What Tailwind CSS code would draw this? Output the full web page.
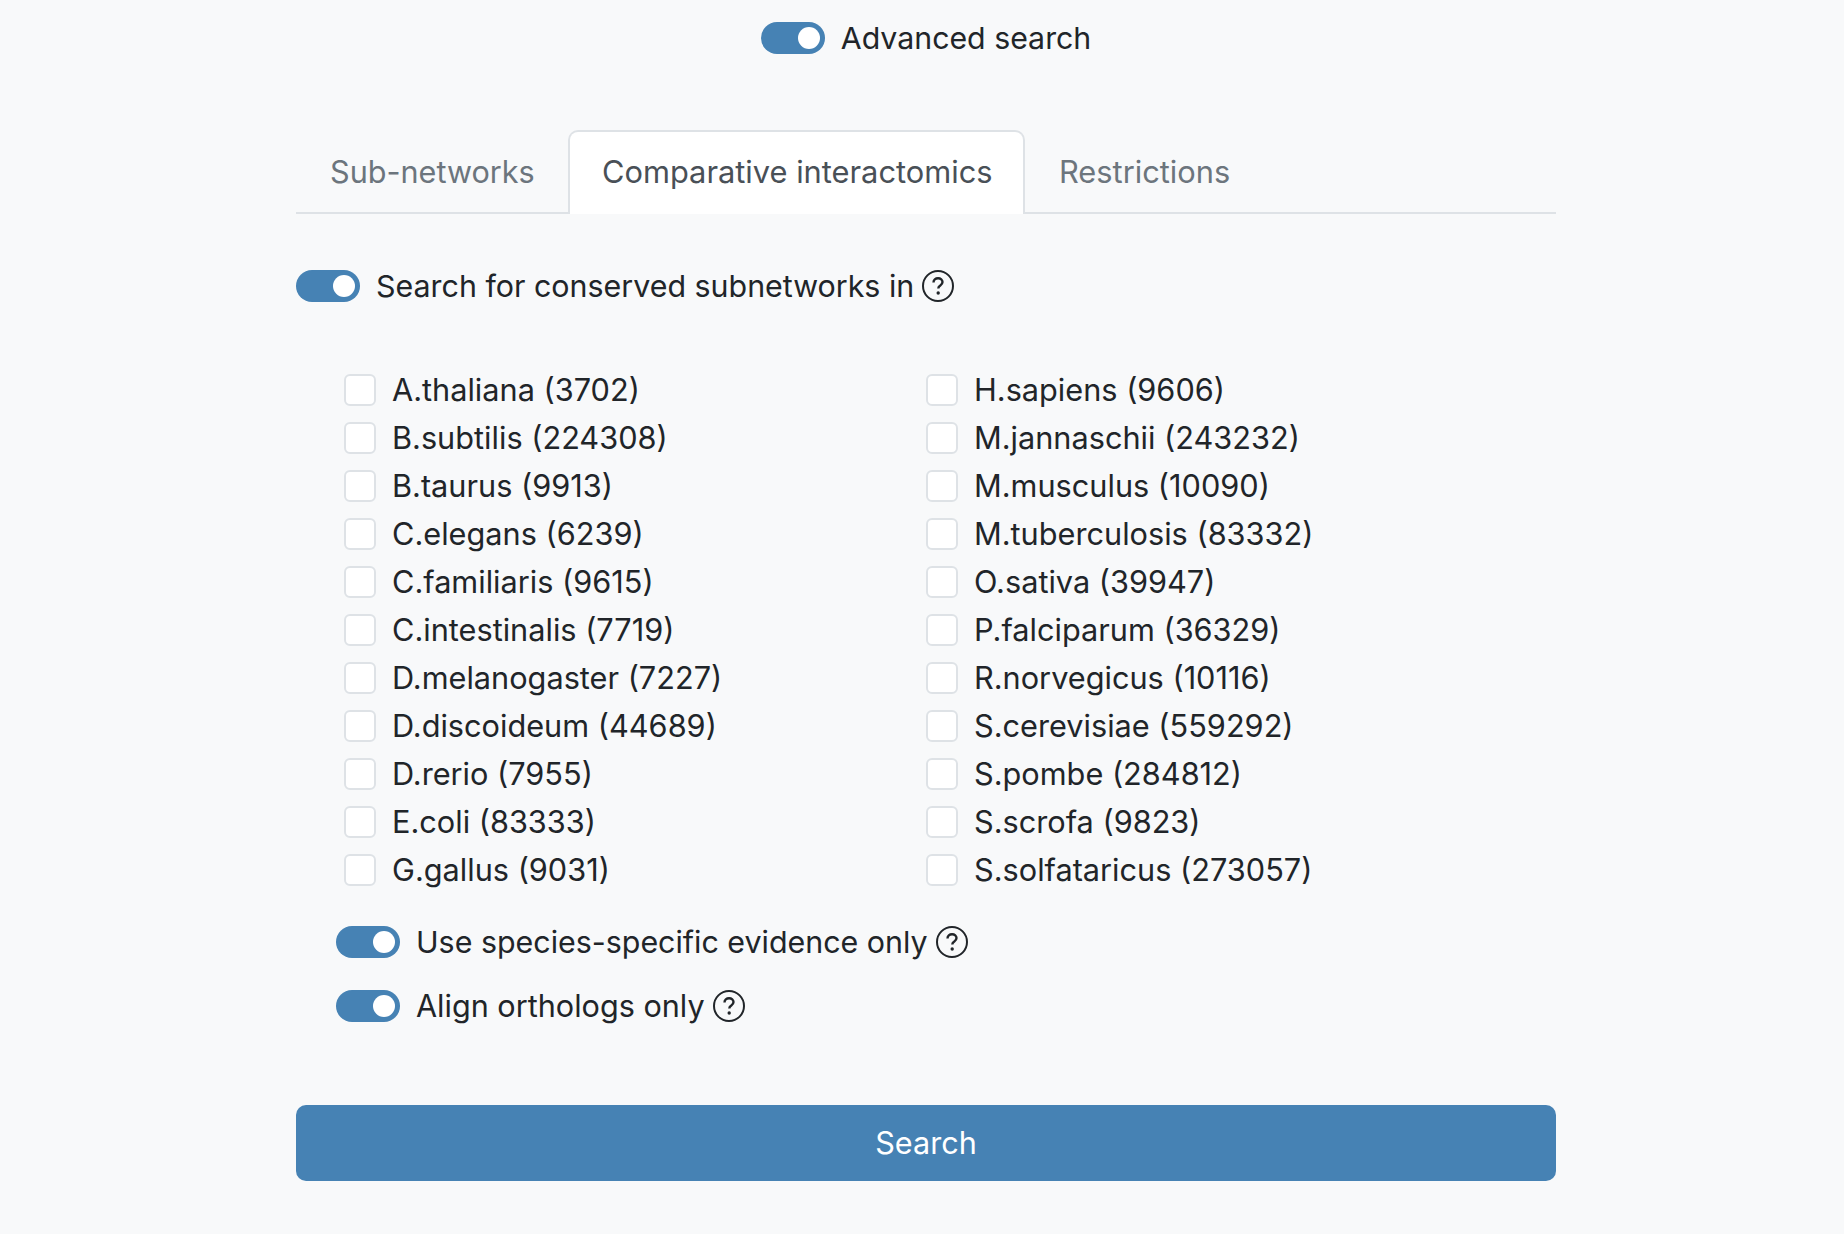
<!DOCTYPE html>
<html lang="en">
<head>
  <meta charset="UTF-8" />
  <title>Advanced search</title>
  <script src="https://cdn.jsdelivr.net/npm/@tailwindcss/browser@4"></script>
</head>
<body class="bg-[#f8f9fa] text-[#212529] font-['Inter',sans-serif] text-[30.7px] leading-[48px] h-[1234px] overflow-hidden">
  <main class="w-[1260px] ml-[296px]">
    <!-- Advanced toggle -->
    <div class="pt-[14px] flex justify-center items-center gap-[16px] h-[62px] text-[30.3px]">
      <span class="w-[64px] h-[32px] rounded-full bg-[#4682b4] flex items-center justify-end pr-[5px]"><span class="w-[22px] h-[22px] rounded-full bg-white"></span></span>
      <span>Advanced search</span>
    </div>

    <!-- Tabs -->
    <div class="mt-[68px] h-[84px] flex border-b-2 border-[#dee2e6] text-[30.8px]">
      <div class="w-[272px] h-[84px] pl-[34px] pt-[18px] text-[30.6px] text-[#6c757d]">Sub-networks</div>
      <div class="w-[457px] h-[84px] pl-[32px] pt-[16px] bg-white border-2 border-b-0 border-[#dee2e6] rounded-t-[10px] text-[#495057]">Comparative interactomics</div>
      <div class="h-[84px] pl-[34px] pt-[18px] text-[#6c757d]">Restrictions</div>
    </div>

    <!-- Conserved subnetworks -->
    <div class="mt-[48px] flex items-center gap-[16px] h-[48px] text-[30.4px]">
      <span class="w-[64px] h-[32px] rounded-full bg-[#4682b4] flex items-center justify-end pr-[5px]"><span class="w-[22px] h-[22px] rounded-full bg-white"></span></span>
      <span class="flex items-center gap-[8px]">Search for conserved subnetworks in
        <svg class="w-[32px] h-[32px]" viewBox="0 0 32 32" fill="none"><circle cx="16" cy="16" r="15" stroke="#212529" stroke-width="2"/><path d="M11.5 12.5c0-2.6 2-4.2 4.6-4.2 2.5 0 4.4 1.5 4.4 3.8 0 1.7-.9 2.6-2.2 3.5-1.4.9-2 1.6-2 3" stroke="#212529" stroke-width="2.4"/><circle cx="16.2" cy="23" r="1.7" fill="#212529"/></svg>
      </span>
    </div>

    <!-- Species -->
    <div class="mt-[56px] ml-[48px] grid grid-cols-[582px_1fr] grid-rows-[repeat(11,48px)] grid-flow-col">
      <label class="flex items-center gap-[16px]"><span class="w-[32px] h-[32px] rounded-[6px] bg-white border-2 border-[#dee2e6]"></span>A.thaliana (3702)</label>
      <label class="flex items-center gap-[16px]"><span class="w-[32px] h-[32px] rounded-[6px] bg-white border-2 border-[#dee2e6]"></span>B.subtilis (224308)</label>
      <label class="flex items-center gap-[16px]"><span class="w-[32px] h-[32px] rounded-[6px] bg-white border-2 border-[#dee2e6]"></span>B.taurus (9913)</label>
      <label class="flex items-center gap-[16px]"><span class="w-[32px] h-[32px] rounded-[6px] bg-white border-2 border-[#dee2e6]"></span>C.elegans (6239)</label>
      <label class="flex items-center gap-[16px]"><span class="w-[32px] h-[32px] rounded-[6px] bg-white border-2 border-[#dee2e6]"></span>C.familiaris (9615)</label>
      <label class="flex items-center gap-[16px]"><span class="w-[32px] h-[32px] rounded-[6px] bg-white border-2 border-[#dee2e6]"></span>C.intestinalis (7719)</label>
      <label class="flex items-center gap-[16px]"><span class="w-[32px] h-[32px] rounded-[6px] bg-white border-2 border-[#dee2e6]"></span>D.melanogaster (7227)</label>
      <label class="flex items-center gap-[16px]"><span class="w-[32px] h-[32px] rounded-[6px] bg-white border-2 border-[#dee2e6]"></span>D.discoideum (44689)</label>
      <label class="flex items-center gap-[16px]"><span class="w-[32px] h-[32px] rounded-[6px] bg-white border-2 border-[#dee2e6]"></span>D.rerio (7955)</label>
      <label class="flex items-center gap-[16px]"><span class="w-[32px] h-[32px] rounded-[6px] bg-white border-2 border-[#dee2e6]"></span>E.coli (83333)</label>
      <label class="flex items-center gap-[16px]"><span class="w-[32px] h-[32px] rounded-[6px] bg-white border-2 border-[#dee2e6]"></span>G.gallus (9031)</label>
      <label class="flex items-center gap-[16px]"><span class="w-[32px] h-[32px] rounded-[6px] bg-white border-2 border-[#dee2e6]"></span>H.sapiens (9606)</label>
      <label class="flex items-center gap-[16px]"><span class="w-[32px] h-[32px] rounded-[6px] bg-white border-2 border-[#dee2e6]"></span>M.jannaschii (243232)</label>
      <label class="flex items-center gap-[16px]"><span class="w-[32px] h-[32px] rounded-[6px] bg-white border-2 border-[#dee2e6]"></span>M.musculus (10090)</label>
      <label class="flex items-center gap-[16px]"><span class="w-[32px] h-[32px] rounded-[6px] bg-white border-2 border-[#dee2e6]"></span>M.tuberculosis (83332)</label>
      <label class="flex items-center gap-[16px]"><span class="w-[32px] h-[32px] rounded-[6px] bg-white border-2 border-[#dee2e6]"></span>O.sativa (39947)</label>
      <label class="flex items-center gap-[16px]"><span class="w-[32px] h-[32px] rounded-[6px] bg-white border-2 border-[#dee2e6]"></span>P.falciparum (36329)</label>
      <label class="flex items-center gap-[16px]"><span class="w-[32px] h-[32px] rounded-[6px] bg-white border-2 border-[#dee2e6]"></span>R.norvegicus (10116)</label>
      <label class="flex items-center gap-[16px]"><span class="w-[32px] h-[32px] rounded-[6px] bg-white border-2 border-[#dee2e6]"></span>S.cerevisiae (559292)</label>
      <label class="flex items-center gap-[16px]"><span class="w-[32px] h-[32px] rounded-[6px] bg-white border-2 border-[#dee2e6]"></span>S.pombe (284812)</label>
      <label class="flex items-center gap-[16px]"><span class="w-[32px] h-[32px] rounded-[6px] bg-white border-2 border-[#dee2e6]"></span>S.scrofa (9823)</label>
      <label class="flex items-center gap-[16px]"><span class="w-[32px] h-[32px] rounded-[6px] bg-white border-2 border-[#dee2e6]"></span>S.solfataricus (273057)</label>
    </div>

    <!-- Options -->
    <div class="mt-[24px] ml-[40px] flex items-center gap-[16px] h-[48px] text-[30.4px]">
      <span class="w-[64px] h-[32px] rounded-full bg-[#4682b4] flex items-center justify-end pr-[5px]"><span class="w-[22px] h-[22px] rounded-full bg-white"></span></span>
      <span class="flex items-center gap-[8px]">Use species-specific evidence only
        <svg class="w-[32px] h-[32px]" viewBox="0 0 32 32" fill="none"><circle cx="16" cy="16" r="15" stroke="#212529" stroke-width="2"/><path d="M11.5 12.5c0-2.6 2-4.2 4.6-4.2 2.5 0 4.4 1.5 4.4 3.8 0 1.7-.9 2.6-2.2 3.5-1.4.9-2 1.6-2 3" stroke="#212529" stroke-width="2.4"/><circle cx="16.2" cy="23" r="1.7" fill="#212529"/></svg>
      </span>
    </div>
    <div class="mt-[16px] ml-[40px] flex items-center gap-[16px] h-[48px] text-[30.6px]">
      <span class="w-[64px] h-[32px] rounded-full bg-[#4682b4] flex items-center justify-end pr-[5px]"><span class="w-[22px] h-[22px] rounded-full bg-white"></span></span>
      <span class="flex items-center gap-[8px]">Align orthologs only
        <svg class="w-[32px] h-[32px]" viewBox="0 0 32 32" fill="none"><circle cx="16" cy="16" r="15" stroke="#212529" stroke-width="2"/><path d="M11.5 12.5c0-2.6 2-4.2 4.6-4.2 2.5 0 4.4 1.5 4.4 3.8 0 1.7-.9 2.6-2.2 3.5-1.4.9-2 1.6-2 3" stroke="#212529" stroke-width="2.4"/><circle cx="16.2" cy="23" r="1.7" fill="#212529"/></svg>
      </span>
    </div>

    <button class="mt-[75px] w-full h-[76px] rounded-[10px] bg-[#4682b4] text-white text-[30.6px]">Search</button>
  </main>
</body>
</html>
